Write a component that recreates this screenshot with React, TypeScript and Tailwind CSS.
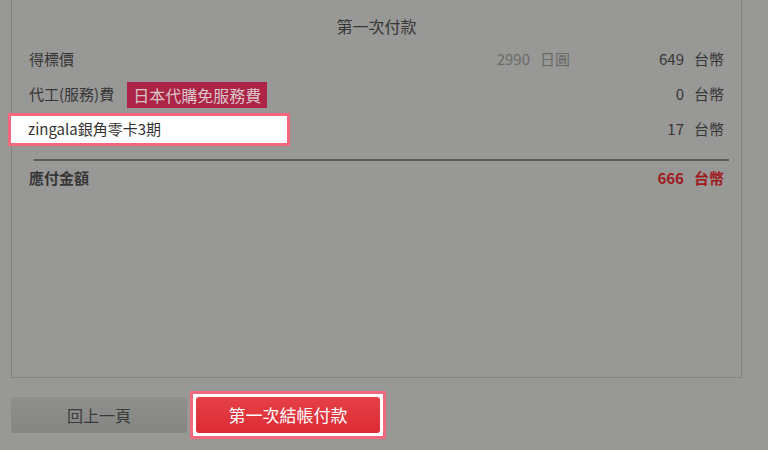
import React from 'react';

const font = { fontFamily: '"Noto Sans CJK TC", "Noto Sans", sans-serif' };

function Amount({ value, unit, className = '' }: { value: string; unit: string; className?: string }) {
  return (
    <div className={`flex items-center justify-end gap-[10px] ${className}`}>
      <span>{value}</span>
      <span>{unit}</span>
    </div>
  );
}

export default function App() {
  return (
    <div className="w-[768px] h-[450px] bg-[#989896] px-[11px] overflow-hidden text-[15px] text-[#363636]" style={font}>
      {/* Payment panel */}
      <div className="w-[731px] h-[378px] border-x border-b border-[#828280] pt-[14px]">
        <div className="text-center text-[16px] leading-[24px] mb-[4px]">第一次付款</div>

        <div className="flex items-center h-[35px] px-[17px]">
          <div className="flex-1">得標價</div>
          <Amount value="2990" unit="日圓" className="w-[80px] text-[#6a6a68]" />
          <Amount value="649" unit="台幣" className="w-[154px]" />
        </div>

        <div className="flex items-center h-[35px] px-[17px]">
          <div className="flex-1 flex items-center gap-[13px]">
            <span>代工(服務)費</span>
            <span className="bg-[#ad2446] text-[#d9c6cb] text-[16px] px-[6px] h-[26px] leading-[26px]">日本代購免服務費</span>
          </div>
          <Amount value="0" unit="台幣" />
        </div>

        <div className="flex items-center h-[34px] px-[17px]">
          <div className="flex-1">
            <div className="-ml-[18px] w-[276px] h-[27px] pl-[17px] bg-white text-[#333] flex items-center outline-[3px] outline-solid outline-[#f3677f]">
              zingala銀角零卡3期
            </div>
          </div>
          <Amount value="17" unit="台幣" />
        </div>

        <div className="ml-[22px] mr-[12px] mt-[13px] h-[2px] bg-[#5c5c5a]" />

        <div className="flex items-center h-[34px] px-[17px] font-bold">
          <div className="flex-1">應付金額</div>
          <Amount value="666" unit="台幣" className="text-[#a01a1e]" />
        </div>
      </div>

      {/* Actions */}
      <div className="flex items-center gap-[6px] mt-[16px]">
        <button className="w-[176px] h-[36px] rounded-[3px] bg-gradient-to-b from-[#8f8f8d] to-[#858583] text-[#3a3a3a] text-[16px]">
          回上一頁
        </button>
        <div className="p-[3px] bg-white outline-[3px] outline-solid outline-[#f3677f]">
          <button className="w-[184px] h-[36px] rounded-[3px] bg-gradient-to-b from-[#e64048] to-[#dc2a33] text-white text-[17px]">
            第一次結帳付款
          </button>
        </div>
      </div>
    </div>
  );
}
